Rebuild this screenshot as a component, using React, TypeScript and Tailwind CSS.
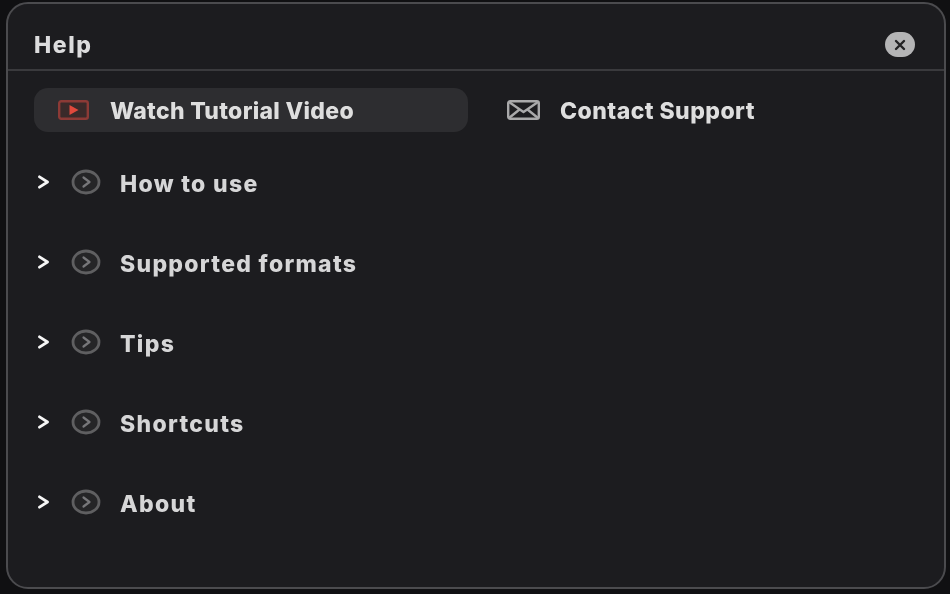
import React from "react";

const items = ["How to use", "Supported formats", "Tips", "Shortcuts", "About"];

function Row({ label }: { label: string }) {
  return (
    <div className="flex h-20 items-center">
      <svg width="14" height="14" viewBox="0 0 14 14" className="mb-[3px] ml-[2px] shrink-0" fill="none" stroke="#f5f5f5" strokeWidth="2.8" strokeLinecap="round" strokeLinejoin="round">
        <path d="M2.5 1.8 L10.5 7 L2.5 12.2" />
      </svg>
      <svg width="30" height="26" viewBox="0 0 30 26" className="mb-[2px] ml-[20px] shrink-0" fill="none">
        <ellipse cx="15" cy="13" rx="13" ry="11" fill="#252527" stroke="#5f5f61" strokeWidth="2.8" />
        <path d="M12.5 8.5 L18.5 13 L12.5 17.5" stroke="#77777a" strokeWidth="2.2" strokeLinecap="round" strokeLinejoin="round" />
      </svg>
      <span className="ml-[19px] mt-[2px] text-[23px] font-extrabold leading-none tracking-[1.3px] text-[#d6d6d7]">{label}</span>
    </div>
  );
}

export default function App() {
  return (
    <div className="h-[594px] w-[950px] overflow-hidden bg-[#101012] pb-[5px] pl-[6px] pr-[4px] pt-[2px] font-['Inter',sans-serif] blur-[0.5px]">
      <div className="flex h-full flex-col rounded-[22px] border-2 border-[#4b4b4e] bg-[#1c1c1f]">
        <div className="flex h-[67px] shrink-0 items-center justify-between border-b-2 border-[#3a3a3d] pl-[26px] pr-[29px] pt-[16px]">
          <span className="mt-[1px] text-[23px] font-extrabold leading-none tracking-[1.6px] text-[#dcdcdd]">Help</span>
          <div className="flex h-[25px] w-[30px] items-center justify-center rounded-full bg-[#b4b4b5]">
            <svg width="12" height="12" viewBox="0 0 12 12" fill="none" stroke="#222224" strokeWidth="2.4" strokeLinecap="round">
              <path d="M2 2 L10 10 M10 2 L2 10" />
            </svg>
          </div>
        </div>
        <div className="mt-[17px] flex items-center pl-[26px]">
          <div className="flex h-[44px] w-[434px] items-center rounded-[14px] bg-[#2d2d30] pl-[24px]">
            <svg width="31" height="20" viewBox="0 0 31 20" fill="none" className="shrink-0">
              <rect x="1.2" y="1.2" width="28.6" height="17.6" rx="2" fill="#3a2a2a" stroke="#8c3a36" strokeWidth="2.4" />
              <path d="M11.5 5 L20.5 10 L11.5 15 Z" fill="#e0493c" />
            </svg>
            <span className="ml-[21px] mt-[2px] whitespace-nowrap text-[23px] font-extrabold leading-none tracking-[0.3px] text-[#dedede]">Watch Tutorial Video</span>
          </div>
          <div className="ml-[39px] flex items-center">
            <svg width="33" height="20" viewBox="0 0 33 20" fill="none" stroke="#a9a9aa" strokeWidth="2.4" strokeLinejoin="round" className="shrink-0">
              <rect x="1.2" y="1.2" width="30.6" height="17.6" rx="2" />
              <path d="M2 2 L16.5 12 L31 2 M2 18 L12.5 9.5 M31 18 L20.5 9.5" />
            </svg>
            <span className="ml-[20px] mt-[2px] whitespace-nowrap text-[23px] font-extrabold leading-none tracking-[0.45px] text-[#dedede]">Contact Support</span>
          </div>
        </div>
        <div className="mt-[11px] flex flex-col pl-[27px]">
          {items.map((t) => (
            <Row key={t} label={t} />
          ))}
        </div>
      </div>
    </div>
  );
}
